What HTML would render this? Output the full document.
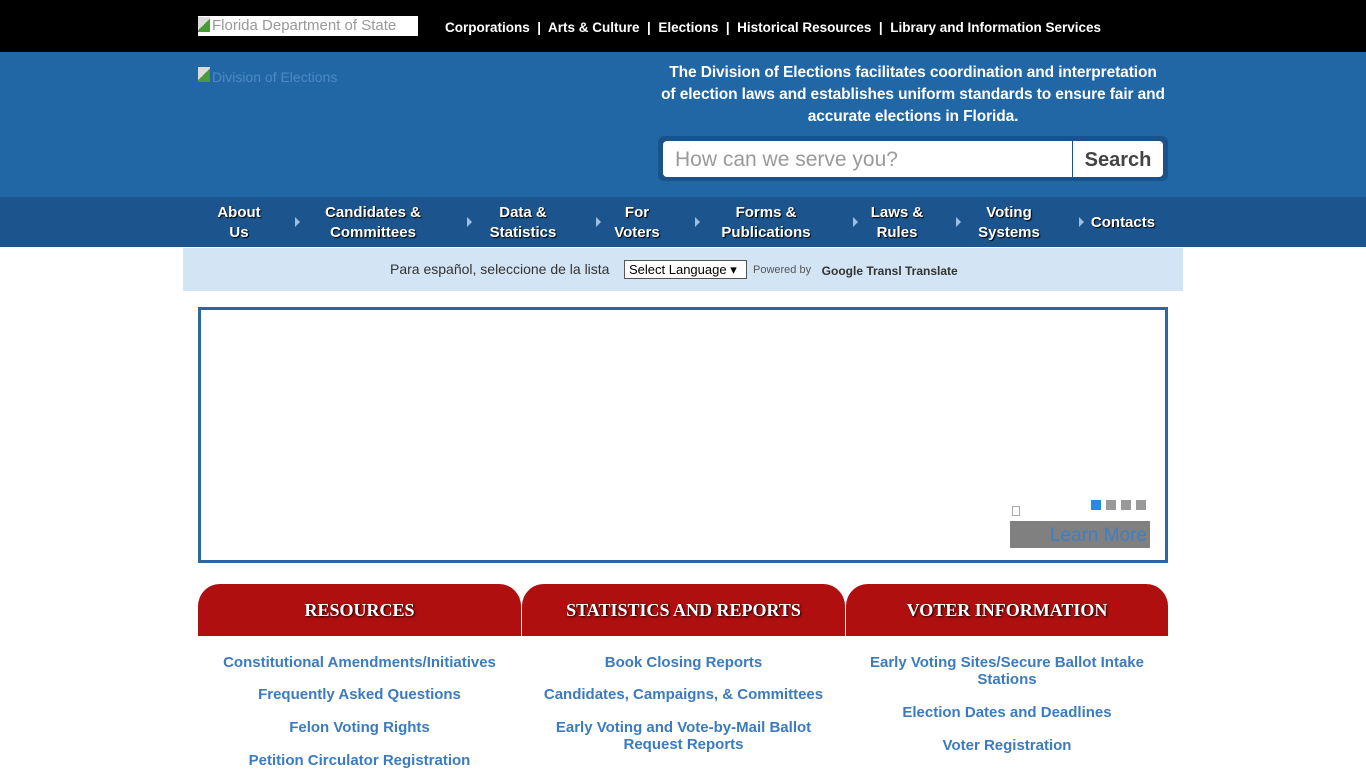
<!DOCTYPE html>
<html><head><meta charset="utf-8"><style>
*{margin:0;padding:0;box-sizing:border-box}
body{width:1366px;height:768px;overflow:hidden;background:#fff;font-family:"Liberation Sans",sans-serif;position:relative}
.a{position:absolute}
#top{left:0;top:0;width:1366px;height:52px;background:#000}
#hdr{left:0;top:52px;width:1366px;height:145px;background:#2167a6}
#nav{left:0;top:197px;width:1366px;height:50px;background:#1c548d}
.nv{color:#fff;font-weight:bold;font-size:15px;text-align:center;line-height:20px;text-shadow:1px 1px 1px #000;white-space:nowrap}
.ar{width:0;height:0;border-left:5px solid #9ec0e0;border-top:5px solid transparent;border-bottom:5px solid transparent}
.lk{color:#3b7bbf;font-weight:bold;font-size:15px;text-align:center;line-height:17px}
.tab{top:584px;height:52px;background:#b00f0f;border-radius:22px 22px 0 0;color:#fff;font-family:"Liberation Serif",serif;font-weight:bold;font-size:18px;text-align:center;line-height:52px;text-shadow:1px 1px 2px #000}
</style></head><body>
<div class="a" id="top"></div>
<div class="a" style="left:198px;top:16px;width:220px;height:20px;background:#fff;color:#999;font-size:15px;line-height:20px;padding-left:14px;white-space:nowrap;overflow:hidden">Florida Department of State</div>
<div class="a" style="left:198px;top:17px;width:12px;height:15px;background:linear-gradient(135deg,#ddd 50%,#4a9a3a 50%)"></div>
<div class="a" style="left:445px;top:20px;color:#fff;font-weight:bold;font-size:13.5px;white-space:nowrap">Corporations&nbsp; |&nbsp; Arts &amp; Culture&nbsp; |&nbsp; Elections&nbsp; |&nbsp; Historical Resources&nbsp; |&nbsp; Library and Information Services</div>
<div class="a" id="hdr"></div>
<div class="a" style="left:198px;top:67px;width:12px;height:15px;background:linear-gradient(135deg,#ddd 50%,#4a9a3a 50%)"></div>
<div class="a" style="left:212px;top:69px;color:#4d8ac4;font-size:14px">Division of Elections</div>
<div class="a" style="left:660px;top:62px;width:506px;color:#fff;font-weight:bold;font-size:15.5px;line-height:22px;text-align:center;letter-spacing:-0.1px">The Division of Elections facilitates coordination and interpretation of election laws and establishes uniform standards to ensure fair and accurate elections in Florida.</div>
<div class="a" style="left:658px;top:136px;width:510px;height:45px;background:#1a538a;border-radius:6px"></div>
<div class="a" style="left:663px;top:141px;width:409px;height:36px;background:#fff;border-radius:4px 0 0 4px;color:#9a9a9a;font-size:21px;line-height:38px;padding-left:12px">How can we serve you?</div>
<div class="a" style="left:1073px;top:141px;width:90px;height:36px;background:#fff;border-radius:0 4px 4px 0;color:#444;font-weight:bold;font-size:20px;line-height:38px;text-align:center">Search</div>
<div class="a" id="nav"></div>
<div class="a nv" style="left:208px;top:203px;width:62px">About<br>Us</div>
<div class="a ar" style="left:295px;top:217px"></div>
<div class="a nv" style="left:313px;top:203px;width:120px">Candidates &amp;<br>Committees</div>
<div class="a ar" style="left:467px;top:217px"></div>
<div class="a nv" style="left:483px;top:203px;width:80px">Data &amp;<br>Statistics</div>
<div class="a ar" style="left:596px;top:217px"></div>
<div class="a nv" style="left:607px;top:203px;width:60px">For<br>Voters</div>
<div class="a ar" style="left:695px;top:217px"></div>
<div class="a nv" style="left:711px;top:203px;width:110px">Forms &amp;<br>Publications</div>
<div class="a ar" style="left:853px;top:217px"></div>
<div class="a nv" style="left:862px;top:203px;width:70px">Laws &amp;<br>Rules</div>
<div class="a ar" style="left:956px;top:217px"></div>
<div class="a nv" style="left:974px;top:203px;width:70px">Voting<br>Systems</div>
<div class="a ar" style="left:1079px;top:217px"></div>
<div class="a nv" style="left:1088px;top:213px;width:70px">Contacts</div>
<div class="a" style="left:183px;top:248px;width:1000px;height:43px;background:#d3e5f5"></div>
<div class="a" style="left:390px;top:261px;font-size:14px;color:#333">Para español, seleccione de la lista</div>
<div class="a" style="left:624px;top:260px;width:123px;height:19px;background:#fff;border:1px solid #555;font-size:13px;line-height:17px;padding-left:4px;color:#000">Select Language ▾</div>
<div class="a" style="left:753px;top:264px;font-size:11px;color:#555">Powered by</div>
<div class="a" style="left:815px;top:264px;font-size:12px;color:#333;font-weight:bold;white-space:nowrap">&nbsp;&nbsp;Google Transl Translate</div>
<div class="a" style="left:198px;top:307px;width:970px;height:256px;border:3px solid #2a68a3"></div>
<div class="a" style="left:1091px;top:500px;width:10px;height:10px;background:#2b87e0"></div>
<div class="a" style="left:1106px;top:500px;width:10px;height:10px;background:#999"></div>
<div class="a" style="left:1121px;top:500px;width:10px;height:10px;background:#999"></div>
<div class="a" style="left:1136px;top:500px;width:10px;height:10px;background:#999"></div>
<div class="a" style="left:1012px;top:506px;width:8px;height:10px;border:1px solid #aaa"></div>
<div class="a" style="left:1010px;top:521px;width:140px;height:27px;background:#808080;color:#3f7fc4;font-size:19px;line-height:29px;text-align:right;padding-right:3px">Learn More</div>
<div class="a tab" style="left:198px;width:323px">RESOURCES</div>
<div class="a tab" style="left:522px;width:323px">STATISTICS AND REPORTS</div>
<div class="a tab" style="left:846px;width:322px">VOTER INFORMATION</div>
<div class="a lk" style="left:198px;top:654px;width:323px">Constitutional Amendments/Initiatives</div>
<div class="a lk" style="left:198px;top:686px;width:323px">Frequently Asked Questions</div>
<div class="a lk" style="left:198px;top:719px;width:323px">Felon Voting Rights</div>
<div class="a lk" style="left:198px;top:752px;width:323px">Petition Circulator Registration</div>
<div class="a lk" style="left:522px;top:654px;width:323px">Book Closing Reports</div>
<div class="a lk" style="left:522px;top:686px;width:323px">Candidates, Campaigns, &amp; Committees</div>
<div class="a lk" style="left:522px;top:719px;width:323px">Early Voting and Vote-by-Mail Ballot<br>Request Reports</div>
<div class="a lk" style="left:846px;top:654px;width:322px">Early Voting Sites/Secure Ballot Intake<br>Stations</div>
<div class="a lk" style="left:846px;top:704px;width:322px">Election Dates and Deadlines</div>
<div class="a lk" style="left:846px;top:737px;width:322px">Voter Registration</div>
</body></html>
